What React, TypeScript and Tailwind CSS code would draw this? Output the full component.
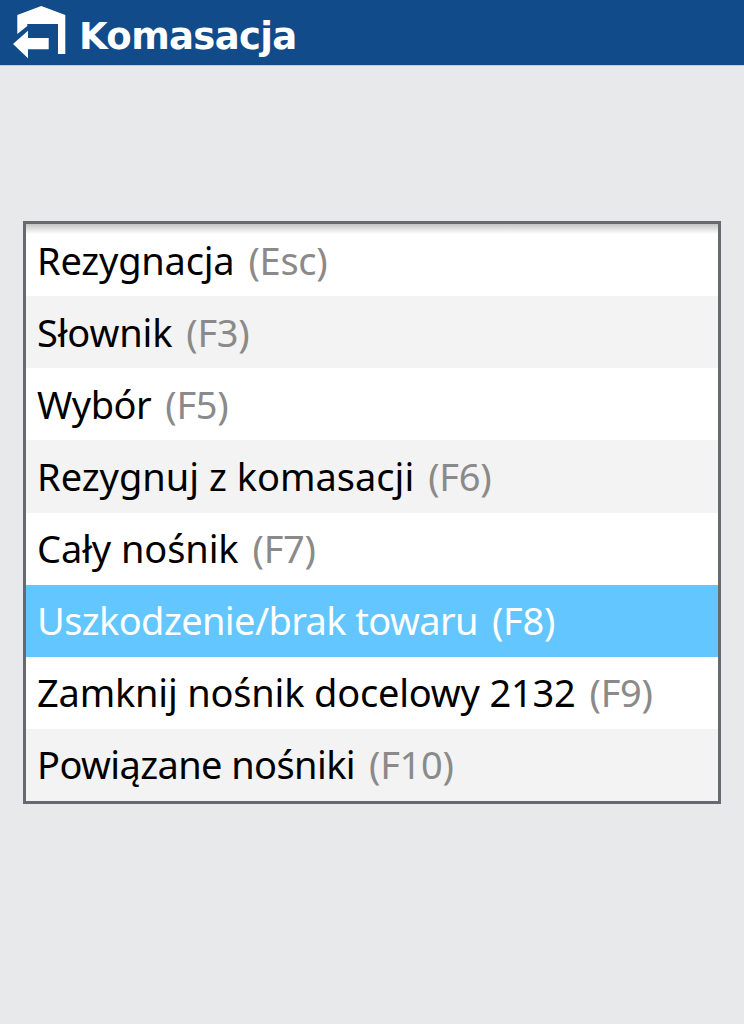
const rows: [string, string, string][] = [
  ["Rezygnacja", "(Esc)", "tracking-[-0.2px]"],
  ["Słownik", "(F3)", "tracking-[-0.15px]"],
  ["Wybór", "(F5)", "tracking-[-0.5px]"],
  ["Rezygnuj z komasacji", "(F6)", "tracking-normal"],
  ["Cały nośnik", "(F7)", "tracking-[-0.1px]"],
  ["Uszkodzenie/brak towaru", "(F8)", "tracking-[-0.6px]"],
  ["Zamknij nośnik docelowy 2132", "(F9)", "tracking-[-0.2px]"],
  ["Powiązane nośniki", "(F10)", "tracking-[-0.6px]"],
];

export default function App() {
  return (
    <div className="min-h-[1024px] w-[744px] bg-[#e8e9eb] font-['Noto_Sans',sans-serif]">
      <header className="flex h-[66px] items-center border-b border-[#c5cbd3] bg-[#124b8a] pl-[13px]">
        <svg width="54" height="54" viewBox="13 5 54 54" className="mb-[1px] shrink-0" fill="#fff">
          <path d="M17.3 15 L41.3 6 L65.3 15 L65.3 54 L58 54 L58 24 L27.3 24 L27.3 26 L17.3 34 Z" />
          <path d="M13 44 L28 30.7 L28 38 L48.7 38 L48.7 49.3 L28 49.3 L28 58.3 Z" />
        </svg>
        <h1 className="mt-[7px] ml-[12px] font-['DejaVu_Sans',sans-serif] text-[37px] leading-none font-bold tracking-[-0.65px] text-white">Komasacja</h1>
      </header>
      <div className="px-[23px] pt-[155px]">
        <div className="relative w-[698px] border-[3px] border-[#666a6e] bg-white">
          <div className="pointer-events-none absolute inset-x-0 top-0 h-[10px] bg-gradient-to-b from-[#c4c4c4] to-transparent" />
          {rows.map(([label, key, spacing], i) => (
            <div
              key={label}
              className={
                "flex h-[72.125px] items-center gap-[14px] pl-[11px] text-[38px] " +
                (i === 5 ? "bg-[#63c6ff] text-white" : i % 2 === 1 ? "bg-[#f3f3f3] text-black" : "bg-white text-black")
              }
            >
              <span className={spacing}>{label}</span>
              <span className={"tracking-[-0.3px] " + (i === 5 ? "text-white" : "text-[#8a8a8a]")}>{key}</span>
            </div>
          ))}
        </div>
      </div>
    </div>
  );
}
